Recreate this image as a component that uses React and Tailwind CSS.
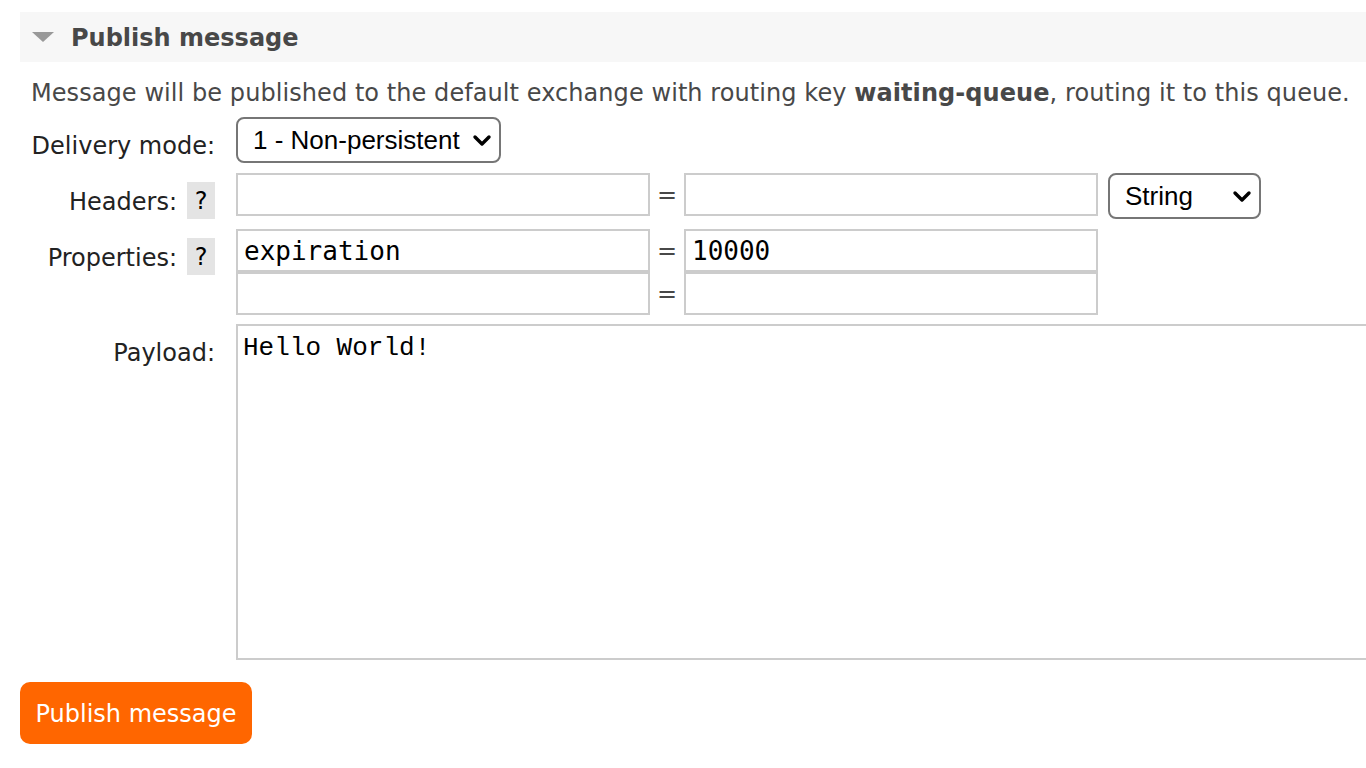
import React from "react";

const sans = { fontFamily: '"DejaVu Sans", Verdana, sans-serif' };

function Chevron() {
  return (
    <svg width="20" height="14" viewBox="0 0 20 14" className="pointer-events-none">
      <path d="M3 4 L10 11 L17 4" fill="none" stroke="#000" strokeWidth="3.4" strokeLinecap="round" strokeLinejoin="round" />
    </svg>
  );
}

function FakeSelect({ value, width, height = 46 }) {
  return (
    <div
      className="flex items-center justify-between rounded-[8px] border-2 border-[#767676] bg-white pl-[15px] pr-[7px] text-[26px] text-black"
      style={{ width, height, fontFamily: '"Liberation Sans", Arial, sans-serif' }}
    >
      <span className="leading-none">{value}</span>
      <Chevron />
    </div>
  );
}

function Help() {
  return (
    <div className="mt-[9px] ml-[10px] flex h-[37px] w-[28px] items-center justify-center bg-[#e4e4e4] text-[24px] text-black">
      ?
    </div>
  );
}

function TextInput({ value = "" }) {
  return (
    <div
      className="flex h-[43px] w-[414px] items-center border-2 border-[#cccccc] bg-white pl-[6px] pt-[2px] text-[26px] text-black"
      style={{ fontFamily: '"DejaVu Sans Mono", monospace' }}
    >
      {value}
    </div>
  );
}

function Eq() {
  return (
    <div className="flex h-[43px] w-[34px] items-center justify-center text-[24px] text-[#484848]" style={sans}>
      =
    </div>
  );
}

export default function App() {
  return (
    <div className="h-[768px] w-[1366px] overflow-hidden bg-white pl-[20px]" style={sans}>
      <div className="mt-[12px] flex h-[50px] items-center bg-[#f7f7f7]">
        <svg width="22" height="10" viewBox="0 0 22 10" className="ml-[12px]">
          <path d="M0 0 L22 0 L11 10 Z" fill="#999999" />
        </svg>
        <span className="ml-[17px] pt-[2px] text-[24px] font-bold text-[#484848]">Publish message</span>
      </div>

      <p className="mt-[17px] pl-[11px] text-[24px] leading-[28px] tracking-[0.07px] text-[#484848] whitespace-nowrap">
        Message will be published to the default exchange with routing key <b>waiting-queue</b>, routing it to this queue.
      </p>

      <div className="mt-[10px] flex items-start">
        <div className="flex w-[195px] shrink-0 justify-end pt-[15px] text-[24px] leading-[28px] text-[#222]">
          Delivery mode:
        </div>
        <div className="ml-[21px]">
          <FakeSelect value="1 - Non-persistent" width={265} />
        </div>
      </div>

      <div className="mt-[10px] flex h-[43px] items-start">
        <div className="flex w-[195px] shrink-0 items-start justify-end text-[24px] leading-[28px] text-[#222]">
          <span className="pt-[15px]">Headers:</span>
          <Help />
        </div>
        <div className="ml-[21px] flex items-start">
          <TextInput />
          <Eq />
          <TextInput />
          <div className="ml-[10px]">
            <FakeSelect value="String" width={153} />
          </div>
        </div>
      </div>

      <div className="mt-[13px] flex items-start">
        <div className="flex w-[195px] shrink-0 items-start justify-end text-[24px] leading-[28px] text-[#222]">
          <span className="pt-[15px]">Properties:</span>
          <Help />
        </div>
        <div className="ml-[21px] flex flex-col">
          <div className="flex">
            <TextInput value="expiration" />
            <Eq />
            <TextInput value="10000" />
          </div>
          <div className="flex">
            <TextInput />
            <Eq />
            <TextInput />
          </div>
        </div>
      </div>

      <div className="mt-[9px] flex items-start">
        <div className="flex w-[195px] shrink-0 justify-end pt-[15px] text-[24px] leading-[28px] text-[#222]">
          Payload:
        </div>
        <div
          className="ml-[21px] h-[336px] w-[1200px] shrink-0 border-2 border-[#cccccc] bg-white pl-[5px] pt-[7px] text-[26px] leading-[30px] text-black"
          style={{ fontFamily: '"Liberation Mono", "Courier New", monospace' }}
        >
          Hello World!
        </div>
      </div>

      <button className="mt-[22px] h-[62px] w-[232px] rounded-[10px] bg-[#ff6600] pt-[2px] text-[24px] text-white" style={sans}>
        Publish message
      </button>
    </div>
  );
}
